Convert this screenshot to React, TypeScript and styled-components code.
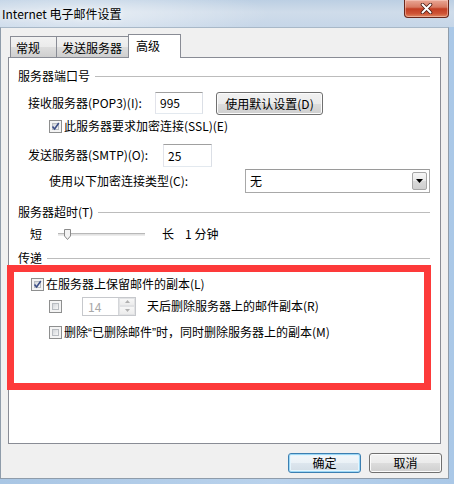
import * as React from 'react';
import styled, { createGlobalStyle, css } from 'styled-components';

const GlobalStyle = createGlobalStyle`
  html, body {
    margin: 0;
    padding: 0;
    background: #b7d1ec;
  }
  body {
    font-family: "Noto Sans CJK SC", "Microsoft YaHei", sans-serif;
    font-size: 12px;
    color: #000;
  }
  #root {
    width: 454px;
    height: 484px;
  }
`;

const Window = styled.div`
  width: 454px;
  height: 484px;
  display: flex;
  flex-direction: column;
  background: linear-gradient(90deg, #a9c6e4 0%, #b9d2ec 60%, #aac8e7 100%);
  overflow: hidden;
`;

const TitleBar = styled.div`
  height: 27px;
  flex: none;
  display: flex;
  align-items: flex-start;
  justify-content: space-between;
  background:
    radial-gradient(ellipse 180px 30px at 90px 14px, rgba(255, 255, 255, 0.5), rgba(255, 255, 255, 0) 100%),
    linear-gradient(180deg, #bccfe3 0%, #cfdcea 45%, #c6d6e8 100%);
`;

const Title = styled.div`
  line-height: 27px;
  padding-left: 2px;
  font-size: 12px;
  color: #000;
  text-shadow: 0 0 6px rgba(255, 255, 255, 0.9);
`;

const CloseButton = styled.div`
  width: 45px;
  height: 18px;
  margin-right: 5px;
  box-sizing: border-box;
  border: 1px solid #6a271b;
  border-top: none;
  border-radius: 0 0 4px 4px;
  display: flex;
  align-items: center;
  justify-content: center;
  background: linear-gradient(180deg, #e9a796 0%, #d87a62 42%, #c23e23 52%, #cf5436 80%, #e08a63 100%);
  box-shadow: inset 0 0 0 1px rgba(255, 220, 210, 0.45);
`;

const Client = styled.div`
  flex: 1;
  display: flex;
  flex-direction: column;
  margin: 0 5px 5px 0;
  border: 1px solid #8f9caa;
  border-top: 1px solid #a8b8c8;
  background: #f0f0f0;
  padding: 6px 7px 0 7px;
  min-height: 0;
`;

const TabStrip = styled.div`
  display: flex;
  align-items: flex-end;
  height: 23px;
  margin-left: 2px;
  position: relative;
  z-index: 1;
`;

const Tab = styled.div<{ $w: number; $active?: boolean }>`
  box-sizing: border-box;
  width: ${({ $w }) => $w}px;
  border: 1px solid #898c95;
  border-bottom: none;
  padding-left: 5px;
  ${({ $active }) =>
    $active
      ? css`
          height: 24px;
          margin-bottom: -1px;
          margin-left: -1px;
          background: #fff;
          line-height: 22px;
          padding-left: 7px;
        `
      : css`
          height: 21px;
          line-height: 21px;
          background: linear-gradient(180deg, #f2f2f2 0%, #ebebeb 50%, #dddddd 51%, #cfcfcf 100%);
          & + & {
            margin-left: -1px;
          }
        `}
`;

const Panel = styled.div`
  flex: 1;
  background: #fff;
  border: 1px solid #898c95;
  padding: 10px 10px 0 9px;
  display: flex;
  flex-direction: column;
  min-height: 0;
`;

const Heading = styled.div<{ $mt?: number; $h?: number }>`
  display: flex;
  align-items: center;
  height: ${({ $h = 16 }) => $h}px;
  line-height: ${({ $h = 16 }) => $h}px;
  margin-top: ${({ $mt = 0 }) => $mt}px;
  white-space: nowrap;

  &::after {
    content: '';
    flex: 1;
    margin-left: 5px;
    border-top: 1px solid #bcbcbc;
    margin-top: 1px;
  }
`;

const Row = styled.div<{ $mt: number; $h: number; $pl?: number }>`
  display: flex;
  align-items: center;
  height: ${({ $h }) => $h}px;
  line-height: ${({ $h }) => $h}px;
  margin-top: ${({ $mt }) => $mt}px;
  padding-left: ${({ $pl = 0 }) => $pl}px;
  white-space: nowrap;
`;

const Label = styled.span<{ $w?: number; $ml?: number; $color?: string }>`
  ${({ $w }) => ($w ? `width: ${$w}px; flex: none;` : '')}
  margin-left: ${({ $ml = 0 }) => $ml}px;
  color: ${({ $color = '#000' }) => $color};
`;

// narrow western quotes, like the original dialog font
const Quote = styled.span`
  font-family: "Liberation Sans", sans-serif;
`;

const TextBox = styled.div<{ $w: number; $h: number }>`
  box-sizing: border-box;
  width: ${({ $w }) => $w}px;
  height: ${({ $h }) => $h}px;
  border: 1px solid #abadb3;
  border-top-color: #a0a0a0;
  border-left-color: #e2e3ea;
  border-right-color: #dbdfe6;
  border-bottom-color: #e3e9ef;
  background: #fff;
  padding-left: 4px;
  line-height: ${({ $h }) => $h - 2}px;
`;

const PushButton = styled.div<{ $w: number; $h: number; $ml?: number; $default?: boolean }>`
  box-sizing: border-box;
  width: ${({ $w }) => $w}px;
  height: ${({ $h }) => $h}px;
  margin-left: ${({ $ml = 0 }) => $ml}px;
  border: 1px solid #707070;
  border-radius: 3px;
  background: linear-gradient(180deg, #f2f2f2 0%, #ebebeb 50%, #dddddd 51%, #cfcfcf 100%);
  box-shadow: inset 0 0 0 1px #fbfbfb;
  text-align: center;
  line-height: ${({ $h }) => $h - 2}px;
  ${({ $default }) =>
    $default &&
    css`
      border-color: #3c7fb1;
      box-shadow: inset 0 0 0 1px #9cd7f5, inset 0 0 0 2px #e5f5fd;
      background: linear-gradient(180deg, #f4f8fb 0%, #eaf1f6 50%, #dde6ee 51%, #d2dde6 100%);
    `}
`;

const CheckBoxBox = styled.span<{ $ml?: number }>`
  box-sizing: border-box;
  flex: none;
  width: 13px;
  height: 13px;
  margin-left: ${({ $ml = 0 }) => $ml}px;
  border: 1px solid #8e8f8f;
  background: #f4f4f4;
  padding: 2px;
  display: flex;
`;

const CheckBoxInner = styled.span`
  flex: 1;
  background: linear-gradient(135deg, #d3d6da 0%, #f7f7f7 100%);
  border: 1px solid #b8bcc1;
  position: relative;
`;

const CheckMark = styled.svg`
  position: absolute;
  left: -3px;
  top: -3px;
`;

const CheckBox = ({ checked = false, ml = 0 }: { checked?: boolean; ml?: number }) => (
  <CheckBoxBox $ml={ml}>
    <CheckBoxInner>
      {checked && (
        <CheckMark width="11" height="11" viewBox="0 0 11 11">
          <path d="M2.5 5.5 L4.6 8 L8.8 2" fill="none" stroke="#3b4d86" strokeWidth="1.6" />
        </CheckMark>
      )}
    </CheckBoxInner>
  </CheckBoxBox>
);

const Select = styled.div`
  box-sizing: border-box;
  width: 186px;
  height: 24px;
  border: 1px solid #a8a8a8;
  border-top-color: #9a9a9a;
  background: #fff;
  display: flex;
  align-items: center;
  justify-content: space-between;
  padding: 0 2px 0 4px;
`;

const DropButton = styled.div`
  box-sizing: border-box;
  width: 15px;
  height: 18px;
  border: 1px solid #a6a6a6;
  border-radius: 2px;
  background: linear-gradient(180deg, #f6f6f6 0%, #e9e9e9 50%, #d9d9d9 51%, #cfcfcf 100%);
  display: flex;
  align-items: center;
  justify-content: center;
`;

const SliderTrack = styled.div`
  width: 87px;
  height: 3px;
  margin-left: 16px;
  border-top: 1px solid #b8b8b8;
  border-bottom: 1px solid #ececec;
  background: #e2e2e2;
  box-sizing: border-box;
  position: relative;
`;

const SliderThumb = styled.svg`
  position: absolute;
  left: 6px;
  top: -5px;
`;

const RedBox = styled.div`
  box-sizing: border-box;
  width: 424px;
  height: 125px;
  margin-left: -11px;
  border: 7px solid #fd3a3a;
  display: flex;
  flex-direction: column;
  padding-left: 10px;
`;

const Spinner = styled.div`
  box-sizing: border-box;
  width: 54px;
  height: 19px;
  margin-left: 20px;
  border: 1px solid #c6c8cc;
  display: flex;
  color: #a8a8a8;
  line-height: 17px;
`;

const SpinValue = styled.div`
  flex: 1;
  padding-left: 5px;
`;

const SpinButtons = styled.div`
  width: 16px;
  display: flex;
  flex-direction: column;
  border-left: 1px solid #d4d6d9;
`;

const SpinArrow = styled.div`
  flex: 1;
  display: flex;
  align-items: center;
  justify-content: center;
  background: linear-gradient(180deg, #f7f7f7, #ececec);
  border: 1px solid #e1e2e4;
`;

const Footer = styled.div`
  flex: none;
  display: flex;
  justify-content: flex-end;
  gap: 8px;
  padding: 9px 0 5px 0;
  margin-right: -1px;
`;

const App = () => (
  <>
    <GlobalStyle />
    <Window>
      <TitleBar>
        <Title>Internet 电子邮件设置</Title>
        <CloseButton>
          <svg width="13" height="11" viewBox="0 0 13 11">
            <path
              d="M2.5 1.5 L10.5 9.5 M10.5 1.5 L2.5 9.5"
              stroke="#4a1a12"
              strokeWidth="3.6"
              strokeLinecap="round"
            />
            <path d="M2.5 1.5 L10.5 9.5 M10.5 1.5 L2.5 9.5" stroke="#fff" strokeWidth="2" strokeLinecap="round" />
          </svg>
        </CloseButton>
      </TitleBar>
      <Client>
        <TabStrip>
          <Tab $w={47}>常规</Tab>
          <Tab $w={73}>发送服务器</Tab>
          <Tab $w={53} $active>
            高级
          </Tab>
        </TabStrip>
        <Panel>
          <Heading>服务器端口号</Heading>
          <Row $mt={7} $h={24} $pl={10}>
            <Label $w={127}>接收服务器(POP3)(I):</Label>
            <TextBox $w={48} $h={22}>
              995
            </TextBox>
            <PushButton $w={107} $h={23} $ml={13}>
              使用默认设置(D)
            </PushButton>
          </Row>
          <Row $mt={3} $h={16}>
            <CheckBox checked ml={31} />
            <Label $ml={2}>此服务器要求加密连接(SSL)(E)</Label>
          </Row>
          <Row $mt={9} $h={24} $pl={10}>
            <Label $w={135}>发送服务器(SMTP)(O):</Label>
            <TextBox $w={49} $h={23}>
              25
            </TextBox>
          </Row>
          <Row $mt={2} $h={24} $pl={31}>
            <Label $w={196}>使用以下加密连接类型(C):</Label>
            <Select>
              <span>无</span>
              <DropButton>
                <svg width="7" height="4" viewBox="0 0 7 4">
                  <path d="M0 0 H7 L3.5 4 Z" fill="#000" />
                </svg>
              </DropButton>
            </Select>
          </Row>
          <Heading $mt={11}>服务器超时(T)</Heading>
          <Row $mt={4} $h={20} $pl={12}>
            <Label>短</Label>
            <SliderTrack>
              <SliderThumb width="7" height="11" viewBox="0 0 7 11">
                <path d="M0.5 0.5 H6.5 V7 L3.5 10.5 L0.5 7 Z" fill="#f3f3f3" stroke="#8a8a8a" />
              </SliderThumb>
            </SliderTrack>
            <Label $ml={17}>长</Label>
            <Label $ml={11}>1 分钟</Label>
          </Row>
          <Heading $mt={7} $h={14}>
            传递
          </Heading>
          <RedBox>
            <Row $mt={4} $h={16}>
              <CheckBox checked ml={7} />
              <Label $ml={2}>在服务器上保留邮件的副本(L)</Label>
            </Row>
            <Row $mt={4} $h={20}>
              <CheckBox ml={25} />
              <Spinner>
                <SpinValue>14</SpinValue>
                <SpinButtons>
                  <SpinArrow>
                    <svg width="5" height="3" viewBox="0 0 5 3">
                      <path d="M0 3 L2.5 0 L5 3 Z" fill="#b0b0b0" />
                    </svg>
                  </SpinArrow>
                  <SpinArrow>
                    <svg width="5" height="3" viewBox="0 0 5 3">
                      <path d="M0 0 H5 L2.5 3 Z" fill="#b0b0b0" />
                    </svg>
                  </SpinArrow>
                </SpinButtons>
              </Spinner>
              <Label $ml={11}>天后删除服务器上的邮件副本(R)</Label>
            </Row>
            <Row $mt={8} $h={16}>
              <CheckBox ml={25} />
              <Label $ml={2}>
                删除<Quote>“</Quote>已删除邮件<Quote>”</Quote>时，同时删除服务器上的副本(M)
              </Label>
            </Row>
          </RedBox>
        </Panel>
        <Footer>
          <PushButton $w={73} $h={20} $default>
            确定
          </PushButton>
          <PushButton $w={73} $h={20}>
            取消
          </PushButton>
        </Footer>
      </Client>
    </Window>
  </>
);

export default App;
